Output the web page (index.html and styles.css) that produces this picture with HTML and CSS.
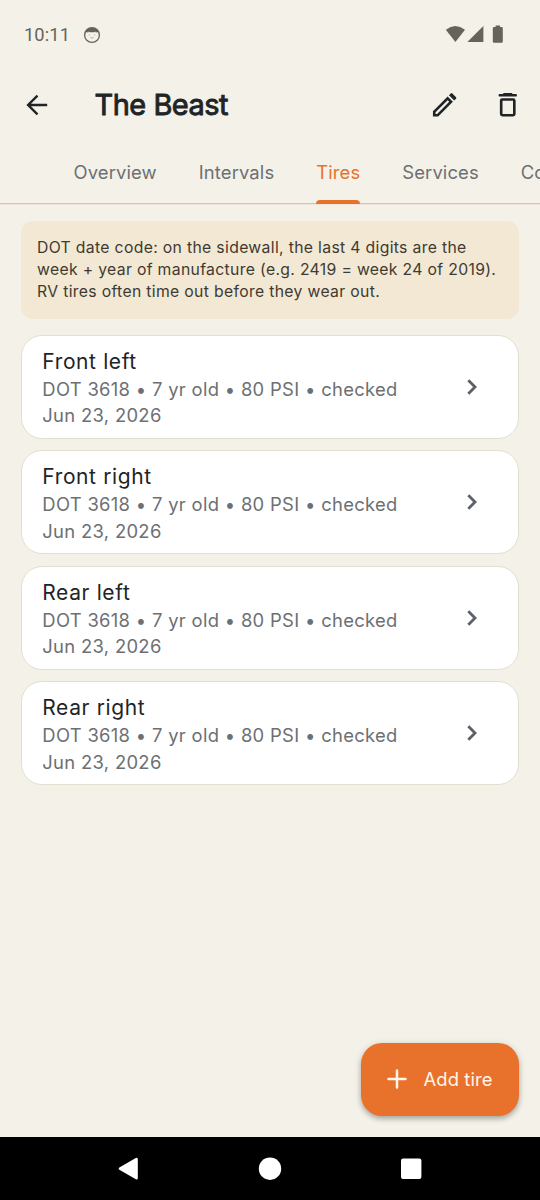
FILE: index.html
```html
<!DOCTYPE html>
<html lang="en">
<head>
<meta charset="utf-8">
<title>The Beast</title>
<link rel="stylesheet" href="styles.css">
</head>
<body>
<div class="screen">
  <div class="status">
    <span class="clock">10:11</span>
    <svg class="face" width="18" height="18" viewBox="0 0 18 18"><circle cx="9" cy="9" r="7.4" fill="none" stroke="#66635c" stroke-width="1.3"/><path d="M2 6.2C4 .2 14 .2 16 6.2H13.2V7L12.2 5.6 11.4 6.2H6.6L5.8 5.6 4.8 7V6.2Z" fill="#66635c"/><path d="M5.8 9h1M11.2 9h1M7.4 11.6q1.6.8 3.2 0" fill="none" stroke="#66635c" stroke-opacity=".6" stroke-width=".8"/></svg>
    <svg class="signals" width="60" height="20" viewBox="0 0 60 20"><g fill="#66635c"><path d="M.8 4.7Q10.4-2.6 20 4.7L10.4 17Z"/><path d="M38.4 1V17H22.4Z"/><path d="M50.6.4h4.4v1.7h1.6q1.2 0 1.2 1.2v13.3q0 1.2-1.2 1.2h-7.6q-1.2 0-1.2-1.2v-13.3q0-1.2 1.2-1.2h1.6z"/></g></svg>
  </div>
  <header class="appbar">
    <svg class="back" width="24" height="24" viewBox="0 0 24 24"><path d="M23.2 12H4.4M13.5 2.6 4.1 12l9.4 9.4" fill="none" stroke="#1f2426" stroke-width="2.4"/></svg>
    <h1 class="title">The Beast</h1>
    <svg class="edit" width="31.5" height="31.5" viewBox="0 0 24 24"><path fill="#1f2426" fill-rule="evenodd" d="M3 21v-4L14.2 5.8l4 4L7 21zM5 19h1.2L15.4 9.8l-1.2-1.2L5 17.8zM15.2 4.8 16.6 3.4q.6-.6 1.2 0l2.8 2.8q.6.6 0 1.2L19.2 8.8z"/></svg>
    <svg class="trash" width="31.5" height="31.5" viewBox="0 0 24 24"><path d="M9 3h6l.8.9H18.3q.7 0 .7.9t-.7.9H5.7q-.7 0-.7-.9t.7-.9H8.2z" fill="#1f2426"/><path d="M7 8.900q0-.9.900-.9h8.200q.9 0 .9.900v10.200q0 .9-.9.900H7.900q-.9 0-.9-.900z" fill="none" stroke="#1f2426" stroke-width="2"/></svg>
  </header>
  <nav class="tabs">
    <span class="tab">Overview</span><span class="tab">Intervals</span><span class="tab active">Tires</span><span class="tab">Services</span><span class="tab">Costs</span>
  </nav>
  <main class="content">
    <p class="info">DOT date code: on the sidewall, the last 4 digits are the<br>week + year of manufacture (e.g. 2419 = week 24 of 2019).<br>RV tires often time out before they wear out.</p>
    <section class="card"><div><h2>Front left</h2><p>DOT 3618 • 7 yr old • 80 PSI • checked<br>Jun 23, 2026</p></div><svg class="chev" width="12" height="18" viewBox="0 0 12 18"><path d="M2.3 2.3 9 9 2.3 15.7"/></svg></section>
    <section class="card"><div><h2>Front right</h2><p>DOT 3618 • 7 yr old • 80 PSI • checked<br>Jun 23, 2026</p></div><svg class="chev" width="12" height="18" viewBox="0 0 12 18"><path d="M2.3 2.3 9 9 2.3 15.7"/></svg></section>
    <section class="card"><div><h2>Rear left</h2><p>DOT 3618 • 7 yr old • 80 PSI • checked<br>Jun 23, 2026</p></div><svg class="chev" width="12" height="18" viewBox="0 0 12 18"><path d="M2.3 2.3 9 9 2.3 15.7"/></svg></section>
    <section class="card"><div><h2>Rear right</h2><p>DOT 3618 • 7 yr old • 80 PSI • checked<br>Jun 23, 2026</p></div><svg class="chev" width="12" height="18" viewBox="0 0 12 18"><path d="M2.3 2.3 9 9 2.3 15.7"/></svg></section>
  </main>
  <button class="fab"><svg width="20" height="20" viewBox="0 0 20 20"><path d="M10 1.500v17M1.500 10h17" stroke="#fff5e9" stroke-width="2.5" stroke-linecap="round"/></svg><span>Add tire</span></button>
  <footer class="sysnav">
    <svg width="22" height="24" viewBox="0 0 22 24"><path d="M3 11.7 19.5 2.2V21.2Z" fill="#fff" stroke="#fff" stroke-width="2.6" stroke-linejoin="round"/></svg>
    <svg width="24" height="24" viewBox="0 0 24 24"><circle cx="12" cy="11.7" r="11.2" fill="#fff"/></svg>
    <svg width="22" height="24" viewBox="0 0 22 24"><rect x="1" y="1.6" width="20.4" height="20.4" rx="2" fill="#fff"/></svg>
  </footer>
</div>
</body>
</html>
```

FILE: styles.css
```css
* { box-sizing: border-box; }
body { margin: 0; font-family: Inter, Roboto, sans-serif; background: #f4f1e8; }
h1, h2, p { margin: 0; font-weight: 400; }
svg { display: block; flex: none; }
.screen { width: 540px; height: 1200px; display: flex; flex-direction: column; overflow: hidden; white-space: nowrap; }
.status { height: 68px; display: flex; align-items: center; padding: 2px 34px 0 24px; color: #66635c; }
.clock { font: 450 18.3px/22px Roboto, sans-serif; letter-spacing: .1px; width: 59px; }
.signals { margin-left: auto; margin-right: 1.2px; }
.appbar { height: 74px; display: flex; align-items: center; padding: 0 16.5px 0 24px; color: #1f2426; }
.title { margin: -1px 0 0 46.5px; font-size: 28.9px; line-height: 36px; letter-spacing: -.45px; -webkit-text-stroke: .9px #1f2426; }
.edit { margin-left: auto; margin-right: 31.5px; }
.tabs { height: 62px; display: flex; gap: 42px; padding-left: 73.5px; border-bottom: 1px solid #dfbfb3; box-shadow: 0 1px 0 #f0e4da; color: #6c7073; flex: none; }
.tab { height: 62px; font-size: 18.4px; line-height: 60px; letter-spacing: .13px; }
.active { color: #e8722c; position: relative; }
.active::after { content: ""; position: absolute; left: 0; right: 0; bottom: 0; height: 4px; border-radius: 4px 4px 0 0; background: #e8722c; }
.content { flex: 1; padding: 16.6px 21.3px 0; display: flex; flex-direction: column; }
.info { height: 98px; margin-bottom: 16px; padding: 16px 15.7px; border-radius: 12px; background: #f2e8d3; color: #3f3a32; font-size: 15.75px; line-height: 22.4px; letter-spacing: .33px; }
.card { height: 104px; margin-bottom: 11.5px; padding: 11px 39.5px 0 20px; border: 1.3px solid #e2dfcf; border-radius: 21px; background: #fff; display: flex; justify-content: space-between; }
.card h2 { font-size: 21px; line-height: 29px; letter-spacing: .62px; color: #1f2426; }
.card p { font-size: 18.4px; line-height: 26.6px; letter-spacing: .32px; color: #6c7073; }
.chev { margin-top: 31px; fill: none; stroke: #5b6167; stroke-width: 2.8; }
.fab { align-self: flex-end; margin: 0 21px 21px 0; width: 158.5px; height: 73.5px; border: 0; border-radius: 21px; background: #e8722c; color: #fff5e9; display: flex; align-items: center; gap: 16.5px; padding: 0 0 1px 26.5px; font: 400 18.4px/26px Inter, sans-serif; letter-spacing: .1px; box-shadow: 0 3px 5px rgba(0,0,0,.25), 0 1px 8px rgba(0,0,0,.1); }
.sysnav { height: 63px; flex: none; background: #000; display: flex; align-items: center; justify-content: space-between; padding: 0 118px 0 117px; }
```
